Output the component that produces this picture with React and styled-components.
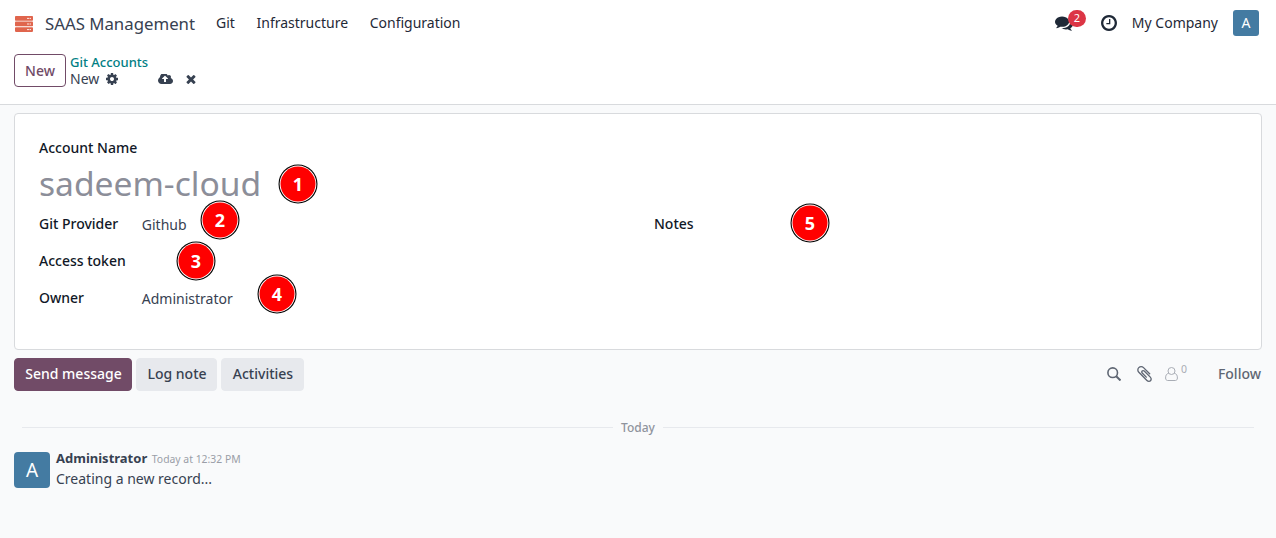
import React from "react";
import styled, { createGlobalStyle } from "styled-components";

const Global = createGlobalStyle`
  * { box-sizing: border-box; }
  body { margin: 0; background: #f9fafb; }
`;

const Page = styled.div`
  height: 538px;
  overflow: hidden;
  background: #f9fafb;
  color: #374151;
  font: 400 14px/21px "Noto Sans", sans-serif;
  white-space: nowrap;
`;

const NavBar = styled.header`
  display: flex;
  align-items: center;
  height: 46px;
  padding: 0 17px 0 15px;
  background: #fff;
  color: #1f2937;
`;

const Brand = styled.div`
  display: flex;
  align-items: center;
  gap: 12px;
  margin-right: 21px;
  padding-top: 1px;
  font-size: 16.8px;
  color: #374151;
`;

const Menu = styled.nav`
  display: flex;
  gap: 21.6px;
  padding-bottom: 2px;
`;

const Tray = styled.div`
  display: flex;
  align-items: center;
  margin-left: auto;
`;

const Messages = styled.div`
  position: relative;
  display: flex;
  width: 18px;
  margin-right: 28px;
`;

const Counter = styled.span`
  position: absolute;
  left: 13px;
  top: -4px;
  width: 18px;
  height: 17px;
  border-radius: 9px;
  background: #dc3545;
  color: #fff;
  font-size: 11px;
  line-height: 16px;
  text-align: center;
`;

const Company = styled.span`
  margin: 0 15px 0 15px;
  padding-bottom: 2px;
`;

const Avatar = styled.div`
  display: flex;
  align-items: center;
  justify-content: center;
  flex: none;
  width: ${(p) => p.$size}px;
  height: ${(p) => p.$size}px;
  padding-bottom: ${(p) => (p.$size > 30 ? 0 : 2)}px;
  border-radius: ${(p) => (p.$size > 30 ? 4 : 3)}px;
  background: #447ba2;
  color: #fff;
  font-size: ${(p) => p.$font}px;
`;

const ControlPanel = styled.section`
  display: flex;
  gap: 4px;
  height: 59px;
  padding: 8px 14px 0;
  background: #fff;
  border-bottom: 1px solid #d8dadd;
`;

const Button = styled.button`
  height: 33px;
  padding: ${(p) => (p.$border ? "0" : "0 0 2px 1px")};
  width: ${(p) => p.$width}px;
  border: 1px solid ${(p) => p.$border || p.$bg};
  border-radius: 4px;
  background: ${(p) => p.$bg};
  color: ${(p) => p.$color};
  font: 500 14px/21px "Noto Sans", sans-serif;
`;

const Crumbs = styled.div`
  display: flex;
  flex-direction: column;
  line-height: 17px;
`;

const CrumbLink = styled.a`
  color: #017e84;
  font-size: 13px;
  font-weight: 500;
`;

const CrumbRow = styled.div`
  display: flex;
  align-items: center;
  line-height: 16px;
`;

const CrumbTitle = styled.span`
  margin-right: 7px;
`;

const RecordActions = styled.div`
  display: flex;
  align-items: center;
  gap: 13px;
  margin-left: 40px;
`;

const Sheet = styled.main`
  height: 237px;
  margin: 8px 14px 0;
  padding: 23px 24px;
  border: 1px solid #d8dadd;
  border-radius: 4px;
  background: #fff;
`;

const Label = styled.div`
  color: #111827;
  font-weight: 500;
`;

const Title = styled.div`
  height: 50px;
  color: #8c8e99;
  font-size: 33.6px;
  line-height: 51px;
`;

const Columns = styled.div`
  display: grid;
  grid-template-columns: 615px 1fr;
  margin-top: 5px;
`;

const Fields = styled.div`
  display: grid;
  grid-template-columns: 102.8px 1fr;
  grid-auto-rows: 37px;
`;

const Value = styled.div`
  padding-top: 1px;
`;

const Pin = styled.span`
  position: absolute;
  left: ${(p) => p.$x - 20}px;
  top: ${(p) => p.$y - 20}px;
  width: 40px;
  height: 40px;
  color: #fff;
  font-size: 18px;
  font-weight: 700;
  line-height: 40px;
  text-align: center;
`;

const PinDisc = styled.svg`
  position: absolute;
  inset: 0;
`;

const PinNumber = styled.span`
  position: relative;
`;

const Toolbar = styled.section`
  display: flex;
  align-items: center;
  gap: 4px;
  margin: 8px 15px 0 14px;
`;

const Tools = styled.div`
  display: flex;
  align-items: center;
  margin-left: auto;
  color: #5f6673;
  padding-bottom: 1px;
`;

const Attachments = styled.span`
  display: flex;
  margin-left: 16px;
`;

const Followers = styled.div`
  display: flex;
  margin: 0 31px 0 13px;
  color: #a9adb5;
`;

const FollowerCount = styled.span`
  margin: -5px 0 0 3px;
  font-size: 10.5px;
  line-height: 14px;
`;

const Follow = styled.span`
  font-weight: 500;
  padding-bottom: 1px;
`;

const DateLine = styled.div`
  display: flex;
  align-items: center;
  gap: 8px;
  margin: 26px 22px 0;
  color: #8f949d;
  font-size: 12px;
  font-weight: 500;
  &::before, &::after {
    content: "";
    flex: 1;
    height: 1px;
    background: #e7e9ed;
  }
`;

const Message = styled.article`
  display: flex;
  gap: 6px;
  margin: 14px 14px 0;
`;

const MessageBody = styled.div`
  margin-top: -4px;
`;

const MessageHead = styled.div`
  height: 20px;
  line-height: 20px;
`;

const Author = styled.strong`
  margin-right: 4.6px;
  font-size: 13px;
  font-weight: 700;
`;

const Time = styled.span`
  color: #9a9ea7;
  font-size: 10.4px;
`;

const glyphs = {
  comments: "M1408 768q0 139-94 257t-256.500 186.500-353.500 68.500q-86 0-176-16-124 88-278 128-36 9-86 16h-3q-11 0-20.500-8t-11.500-21q-1-3-1-6.500t.5-6.500 2-6l2.500-5 3.500-5.500 4-5 4.500-5 4-4.500q5-6 23-25t26-29.500 22.500-29 25-38.500 20.500-44q-124-72-195-177t-71-224q0-139 94-257t256.500-186.500 353.500-68.500 353.500 68.500 256.500 186.500 94 257zm384 256q0 120-71 224.500t-195 176.500q10 24 20.500 44t25 38.500 22.500 29 26 29.500 23 25q1 1 4 4.500t4.500 5 4 5 3.500 5.500l2.500 5 2 6 .5 6.500-1 6.500q-3 14-13 22t-22 7q-50-7-86-16-154-40-278-128-90 16-176 16-271 0-472-132 58 4 88 4 161 0 309-45t264-129q125-92 192-212t67-254q0-77-23-152 129 71 204 178t75 230z",
  clock: "M1024 544v448q0 14-9 23t-23 9h-320q-14 0-23-9t-9-23v-64q0-14 9-23t23-9h224v-352q0-14 9-23t23-9h64q14 0 23 9t9 23zm416 352q0-148-73-273t-198-198-273-73-273 73-198 198-73 273 73 273 198 198 273 73 273-73 198-198 73-273zm224 0q0 209-103 385.500t-279.500 279.500-385.500 103-385.500-103-279.500-279.500-103-385.500 103-385.500 279.500-279.500 385.500-103 385.500 103 279.500 279.500 103 385.500z",
  gear: "M1152 896q0-106-75-181t-181-75-181 75-75 181 75 181 181 75 181-75 75-181zm512-109v222q0 12-8 23t-20 13l-185 28q-19 54-39 91 35 50 107 138 10 12 10 25t-9 23q-27 37-99 108t-94 71q-12 0-26-9l-138-108q-44 23-91 38-16 136-29 186-7 28-36 28h-222q-14 0-24.500-8.500t-11.500-21.500l-28-184q-49-16-90-37l-141 107q-10 9-25 9-14 0-25-11-126-114-165-168-7-10-7-23 0-12 8-23 15-21 51-66.500t54-70.500q-27-50-41-99l-183-27q-13-2-21-12.500t-8-23.500v-222q0-12 8-23t19-13l186-28q14-46 39-92-40-57-107-138-10-12-10-24 0-10 9-23 26-36 98.500-107.500t94.500-71.500q13 0 26 10l138 107q44-23 91-38 16-136 29-186 7-28 36-28h222q14 0 24.500 8.500t11.500 21.500l28 184q49 16 90 37l142-107q9-9 24-9 13 0 25 10 129 119 165 170 7 8 7 22 0 12-8 23-15 21-51 66.500t-54 70.500q26 50 41 98l183 28q13 2 21 12.500t8 23.500z",
  upload: "M1216 864q0-14-9-23l-352-352q-9-9-23-9t-23 9l-351 351q-10 12-10 24 0 14 9 23t23 9h224v352q0 13 9.500 22.500t22.500 9.500h192q13 0 22.500-9.500t9.500-22.500v-352h224q13 0 22.500-9.500t9.500-22.500zm640 288q0 159-112.500 271.500t-271.500 112.500h-1088q-185 0-316.500-131.500t-131.500-316.500q0-130 70-240t188-165q-2-30-2-43 0-212 150-362t362-150q156 0 285.500 87t188.500 231q71-62 166-62 106 0 181 75t75 181q0 76-41 138 130 31 213.500 135.500t83.500 238.500z",
  times: "M1490 1322q0 40-28 68l-136 136q-28 28-68 28t-68-28l-294-294-294 294q-28 28-68 28t-68-28l-136-136q-28-28-28-68t28-68l294-294-294-294q-28-28-28-68t28-68l136-136q28-28 68-28t68 28l294 294 294-294q28-28 68-28t68 28l136 136q28 28 28 68t-28 68l-294 294 294 294q28 28 28 68z",
  clip: "M1596 1385q0 117-79 196t-196 79q-135 0-235-100l-777-776q-113-115-113-271 0-159 110-270t269-111q158 0 273 113l605 606q10 10 10 22 0 16-30.500 46.500t-46.500 30.500q-13 0-23-10l-606-607q-79-77-181-77-106 0-179 75t-73 181q0 105 76 181l776 777q63 63 145 63 64 0 106-42t42-106q0-82-63-145l-581-581q-26-24-60-24-29 0-48 19t-19 48q0 32 25 59l410 410q10 10 10 22 0 16-31 47t-47 31q-12 0-22-10l-410-410q-63-61-63-149 0-82 57-139t139-57q88 0 149 63l581 581q100 98 100 235z",
};

const boxes = {
  comments: "0 0 1792 1792",
  clock: "128 128 1536 1536",
  gear: "128 128 1536 1536",
  upload: "-64 256 1920 1280",
  times: "302 238 1188 1316",
  clip: "196 132 1400 1528",
};

const Glyph = ({ name, w, h }) => (
  <svg width={w} height={h} viewBox={boxes[name]} fill="currentColor">
    <path d={glyphs[name]} />
  </svg>
);

const ServerLogo = () => (
  <svg width="18" height="16" viewBox="0 0 18 16">
    {[0, 5.6, 11.2].map((y) => (
      <g key={y}>
        <rect y={y} width="18" height="4.7" rx="0.8" fill="#e0654d" />
        <path d={`M12 ${y + 2.4}h2M14.5 ${y + 2.4}h1.5`} stroke="#fff" strokeOpacity="0.85" strokeWidth="1" />
      </g>
    ))}
  </svg>
);

const SearchIcon = () => (
  <svg width="14" height="14" viewBox="0 0 14 14" fill="none" stroke="currentColor">
    <circle cx="5.7" cy="5.7" r="4.8" strokeWidth="1.6" />
    <path d="M9.200 9.200l4.300 4.300" strokeWidth="2" />
  </svg>
);

const UserIcon = () => (
  <svg width="13" height="14" viewBox="0 0 13 14" fill="none" stroke="currentColor">
    <circle cx="6.5" cy="4" r="3.5" />
    <path d="M3.600 6.400C1.500 6.600.6 8.300.6 11c0 1.500.8 2.500 2 2.500h7.800c1.200 0 2-1 2-2.500 0-2.700-.9-4.400-3-4.600" />
  </svg>
);

const pins = [
  [1, 298, 184],
  [2, 220, 220],
  [3, 196, 261],
  [4, 277, 294],
  [5, 810, 223],
];

export default function App() {
  return (
    <Page>
      <Global />
      <NavBar>
        <Brand><ServerLogo />SAAS Management</Brand>
        <Menu>
          <span>Git</span>
          <span>Infrastructure</span>
          <span>Configuration</span>
        </Menu>
        <Tray>
          <Messages>
            <Glyph name="comments" w={18} h={18} />
            <Counter>2</Counter>
          </Messages>
          <Glyph name="clock" w={16} h={16} />
          <Company>My Company</Company>
          <Avatar $size={26} $font={14}>A</Avatar>
        </Tray>
      </NavBar>
      <ControlPanel>
        <Button $width={52} $bg="#fff" $border="#714b67" $color="#714b67">New</Button>
        <Crumbs>
          <CrumbLink>Git Accounts</CrumbLink>
          <CrumbRow>
            <CrumbTitle>New</CrumbTitle>
            <Glyph name="gear" w={12} h={12} />
            <RecordActions>
              <Glyph name="upload" w={15} h={10} />
              <Glyph name="times" w={10} h={10} />
            </RecordActions>
          </CrumbRow>
        </Crumbs>
      </ControlPanel>
      <Sheet>
        <Label>Account Name</Label>
        <Title>sadeem-cloud</Title>
        <Columns>
          <Fields>
            <Label>Git Provider</Label>
            <Value>Github</Value>
            <Label>Access token</Label>
            <Value />
            <Label>Owner</Label>
            <Value>Administrator</Value>
          </Fields>
          <Label>Notes</Label>
        </Columns>
      </Sheet>
      <Toolbar>
        <Button $width={118} $bg="#714b67" $color="#fff">Send message</Button>
        <Button $width={81} $bg="#e7e9ed" $color="#374151">Log note</Button>
        <Button $width={83} $bg="#e7e9ed" $color="#374151">Activities</Button>
        <Tools>
          <SearchIcon />
          <Attachments><Glyph name="clip" w={15} h={16} /></Attachments>
          <Followers>
            <UserIcon />
            <FollowerCount>0</FollowerCount>
          </Followers>
          <Follow>Follow</Follow>
        </Tools>
      </Toolbar>
      <DateLine>Today</DateLine>
      <Message>
        <Avatar $size={36} $font={19}>A</Avatar>
        <MessageBody>
          <MessageHead><Author>Administrator</Author><Time>Today at 12:32 PM</Time></MessageHead>
          <div>Creating a new record...</div>
        </MessageBody>
      </Message>
      {pins.map(([n, x, y]) => (
        <Pin key={n} $x={x} $y={y}>
          <PinDisc width="40" height="40" viewBox="0 0 40 40">
            <circle cx="20" cy="20" r="19.500" fill="#000" />
            <circle cx="20" cy="20" r="18.400" fill="#fff" />
            <circle cx="20" cy="20" r="17.500" fill="#f00" />
          </PinDisc>
          <PinNumber>{n}</PinNumber>
        </Pin>
      ))}
    </Page>
  );
}
